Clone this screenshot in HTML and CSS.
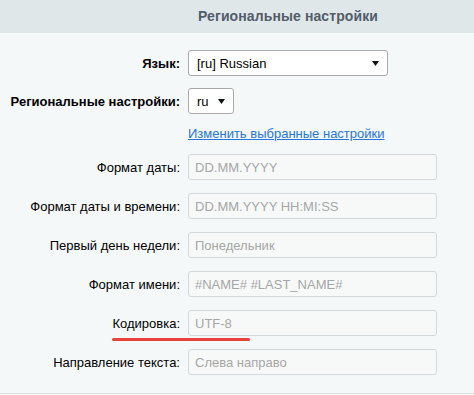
FILE: index.html
```html
<!DOCTYPE html>
<html lang="ru">
<head>
  <meta charset="UTF-8" />
  <meta name="viewport" content="width=device-width, initial-scale=1.0"/>
  <title>Региональные настройки</title>
  <link rel="stylesheet" href="styles.css">
</head>
<body>
  <div class="panel">
    <!-- Заголовок -->
    <div class="panel-head">Региональные настройки</div>

    <div class="form">
      <div class="row row-select">
        <div class="label bold">Язык:</div>
        <div class="select select-wide">
          <span>[ru] Russian</span>
          <svg class="caret" width="7" height="5" viewBox="0 0 7 5"><path d="M0 0H7L3.5 5Z" fill="#111"/></svg>
        </div>
      </div>

      <div class="row row-select">
        <div class="label bold">Региональные настройки:</div>
        <div class="select select-small">
          <span>ru</span>
          <svg class="caret" width="7" height="5" viewBox="0 0 7 5"><path d="M0 0H7L3.5 5Z" fill="#111"/></svg>
        </div>
      </div>

      <div class="row row-link">
        <div class="label"></div>
        <a href="#" class="link">Изменить выбранные настройки</a>
      </div>

      <div class="row">
        <div class="label">Формат даты:</div>
        <input class="field" type="text" placeholder="DD.MM.YYYY">
      </div>
      <div class="row">
        <div class="label">Формат даты и времени:</div>
        <input class="field" type="text" placeholder="DD.MM.YYYY HH:MI:SS">
      </div>
      <div class="row">
        <div class="label">Первый день недели:</div>
        <input class="field" type="text" placeholder="Понедельник">
      </div>
      <div class="row">
        <div class="label">Формат имени:</div>
        <input class="field" type="text" placeholder="#NAME# #LAST_NAME#">
      </div>
      <div class="row">
        <div class="label">Кодировка:</div>
        <input class="field" type="text" placeholder="UTF-8">
      </div>
      <div class="row">
        <div class="label">Направление текста:</div>
        <input class="field" type="text" placeholder="Слева направо">
      </div>
    </div>

    <!-- пометка -->
    <div class="mark"></div>
  </div>
</body>
</html>
```

FILE: styles.css
```css
/* Reset */
* {
  margin: 0;
  padding: 0;
  box-sizing: border-box;
}

html, body {
  background-color: #f5f8f9;
  font-family: 'Liberation Sans', Arial, sans-serif;
  font-size: 13px;
  color: #000;
}

.panel {
  position: relative;
  height: 394px;
  border-bottom: 1px solid #dde3e6;
}

.panel-head {
  height: 33px;
  line-height: 33px;
  padding-left: 198px;
  background: #e0e7e9;
  color: #535c69;
  font-size: 14px;
  font-weight: bold;
  letter-spacing: 0.1px;
}

.form {
  padding-top: 17px;
}

.row {
  display: grid;
  grid-template-columns: 180px 249px;
  column-gap: 8px;
  align-items: center;
  height: 26px;
  margin-bottom: 13px;
}

.row-select {
  margin-bottom: 12px;
}

.row-link {
  height: 16px;
  margin-top: 12px;
  margin-bottom: 12px;
}

.label {
  text-align: right;
}

.bold {
  font-weight: bold;
}

.select {
  display: flex;
  align-items: center;
  height: 26px;
  padding: 0 8px 0 8px;
  background: #fff;
  border: 1px solid #a9a9a9;
  border-radius: 3px;
  color: #000;
}

.select .caret {
  margin-left: auto;
}

.select-wide {
  width: 200px;
}

.select-small {
  width: 46px;
}

.link {
  color: #2675d7;
  text-decoration: underline;
  line-height: 16px;
}

.field {
  width: 249px;
  height: 26px;
  padding: 0 6px;
  font-family: inherit;
  font-size: 13px;
  background: #f7f9f9;
  border: 1px solid #d3d8da;
  border-radius: 3px;
  outline: none;
}

.field::placeholder {
  color: #a6a6a6;
}

.mark {
  position: absolute;
  left: 112px;
  top: 338px;
  width: 138px;
  height: 3px;
  border-radius: 2px;
  background: #e8423b;
}
```
